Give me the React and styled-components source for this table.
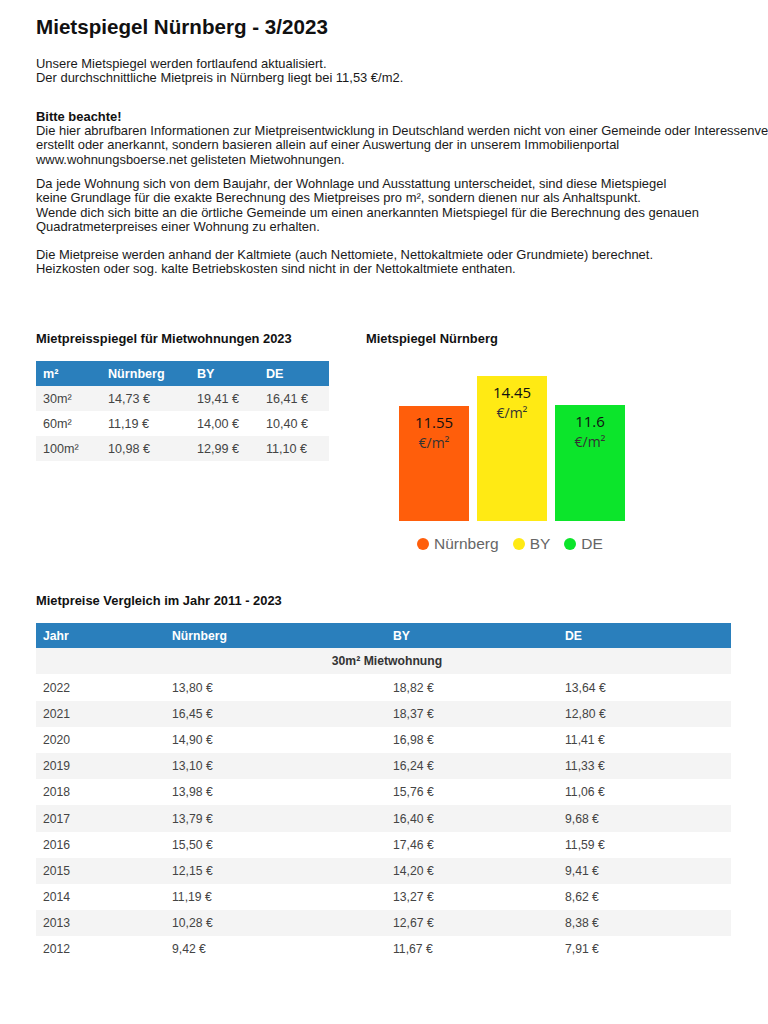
import styled, { createGlobalStyle } from "styled-components";

const GlobalStyle = createGlobalStyle`
  html, body {
    margin: 0;
    padding: 0;
    background: #fff;
    overflow: hidden;
  }
  body {
    font-family: "Liberation Sans", Arial, sans-serif;
    color: #111;
  }
`;

const Page = styled.div`
  width: 900px;
  padding: 14px 0 40px 36px;
`;

const Title = styled.h1`
  margin: 0;
  font-size: 20.6px;
  line-height: 25px;
  font-weight: 700;
  color: #111;
`;

const Text = styled.p`
  margin: ${({ $top }) => $top || 0}px 0 0;
  font-size: 12.95px;
  line-height: 14.4px;
  white-space: nowrap;
  color: #1a1a1a;
`;

const Note = styled.div`
  margin-top: 23px;
  font-size: 12.95px;
  line-height: 15px;
  font-weight: 700;
`;

const Row = styled.div`
  display: flex;
  margin-top: 56px;
`;

const Col = styled.div`
  width: ${({ $w }) => $w}px;
  flex-shrink: 0;
`;

const Heading = styled.h3`
  margin: 0 0 15px;
  font-size: 12.9px;
  line-height: 14px;
  font-weight: 700;
  color: #111;
`;

const Table = styled.table`
  width: ${({ $w }) => $w}px;
  border-collapse: collapse;
  table-layout: fixed;
  font-size: ${({ $fs }) => $fs || 12.6}px;
`;

const Th = styled.th`
  background: #2a7fbc;
  color: #fff;
  font-weight: 700;
  text-align: left;
  height: ${({ $h }) => $h || 25}px;
  padding: 0 0 0 7px;
`;

const Tr = styled.tr`
  background: ${({ $alt }) => ($alt ? "#f4f4f4" : "#fff")};
`;

const Td = styled.td`
  height: ${({ $h }) => $h || 25}px;
  padding: 0 0 0 7px;
  color: #444;
  text-align: ${({ $center }) => ($center ? "center" : "left")};
  font-weight: ${({ $bold }) => ($bold ? 700 : 400)};
  ${({ $bold }) => $bold && "color: #333;"}
`;

const Chart = styled.div`
  padding-left: 33px;
`;

const Bars = styled.div`
  display: flex;
  align-items: flex-end;
  gap: 8px;
  height: 145px;
  margin-top: 30px;
`;

const Bar = styled.div`
  width: 70px;
  background: ${({ $c }) => $c};
  display: flex;
  flex-direction: column;
  align-items: center;
  padding-top: 7px;
  box-sizing: border-box;
  font-family: "Open Sans", sans-serif;
`;

const Value = styled.span`
  font-size: 15px;
  line-height: 18px;
  color: #111;
`;

const Unit = styled.span`
  margin-top: 3px;
  font-size: 14px;
  line-height: 18px;
  color: #333;
`;

const Legend = styled.div`
  display: flex;
  align-items: center;
  margin: 14px 0 0 18px;
  font-family: "Liberation Sans", Arial, sans-serif;
  font-size: 15.5px;
  color: #666;
`;

const LegendItem = styled.span`
  display: flex;
  align-items: center;
  margin-right: 14px;
  &::before {
    content: "";
    width: 12px;
    height: 12px;
    border-radius: 50%;
    background: ${({ $c }) => $c};
    margin-right: 5px;
  }
`;

const Section = styled.div`
  margin-top: 41px;
`;

const small = [
  ["30m²", "14,73 €", "19,41 €", "16,41 €"],
  ["60m²", "11,19 €", "14,00 €", "10,40 €"],
  ["100m²", "10,98 €", "12,99 €", "11,10 €"],
];

const bars = [
  { v: "11.55", h: 115, c: "#ff5e0b" },
  { v: "14.45", h: 145, c: "#ffea14" },
  { v: "11.6", h: 116, c: "#0ce52b" },
];

const years = [
  ["2022", "13,80 €", "18,82 €", "13,64 €"],
  ["2021", "16,45 €", "18,37 €", "12,80 €"],
  ["2020", "14,90 €", "16,98 €", "11,41 €"],
  ["2019", "13,10 €", "16,24 €", "11,33 €"],
  ["2018", "13,98 €", "15,76 €", "11,06 €"],
  ["2017", "13,79 €", "16,40 €", "9,68 €"],
  ["2016", "15,50 €", "17,46 €", "11,59 €"],
  ["2015", "12,15 €", "14,20 €", "9,41 €"],
  ["2014", "11,19 €", "13,27 €", "8,62 €"],
  ["2013", "10,28 €", "12,67 €", "8,38 €"],
  ["2012", "9,42 €", "11,67 €", "7,91 €"],
];

export default function App() {
  return (
    <Page>
      <GlobalStyle />
      <Title>Mietspiegel Nürnberg - 3/2023</Title>

      <Text $top={18}>
        Unsere Mietspiegel werden fortlaufend aktualisiert.
        <br />
        Der durchschnittliche Mietpreis in Nürnberg liegt bei 11,53 €/m2.
      </Text>

      <Note>Bitte beachte!</Note>
      <Text>
        Die hier abrufbaren Informationen zur Mietpreisentwicklung in Deutschland werden nicht von einer Gemeinde oder Interessenverband
        <br />
        erstellt oder anerkannt, sondern basieren allein auf einer Auswertung der in unserem Immobilienportal
        <br />
        www.wohnungsboerse.net gelisteten Mietwohnungen.
      </Text>
      <Text $top={10}>
        Da jede Wohnung sich von dem Baujahr, der Wohnlage und Ausstattung unterscheidet, sind diese Mietspiegel
        <br />
        keine Grundlage für die exakte Berechnung des Mietpreises pro m², sondern dienen nur als Anhaltspunkt.
        <br />
        Wende dich sich bitte an die örtliche Gemeinde um einen anerkannten Mietspiegel für die Berechnung des genauen
        <br />
        Quadratmeterpreises einer Wohnung zu erhalten.
      </Text>
      <Text $top={13}>
        Die Mietpreise werden anhand der Kaltmiete (auch Nettomiete, Nettokaltmiete oder Grundmiete) berechnet.
        <br />
        Heizkosten oder sog. kalte Betriebskosten sind nicht in der Nettokaltmiete enthaten.
      </Text>

      <Row>
        <Col $w={330}>
          <Heading>Mietpreisspiegel für Mietwohnungen 2023</Heading>
          <Table $w={293}>
            <colgroup>
              <col style={{ width: 65 }} />
              <col style={{ width: 89 }} />
              <col style={{ width: 69 }} />
              <col style={{ width: 70 }} />
            </colgroup>
            <thead>
              <tr>
                <Th>m²</Th>
                <Th>Nürnberg</Th>
                <Th>BY</Th>
                <Th>DE</Th>
              </tr>
            </thead>
            <tbody>
              {small.map((r, i) => (
                <Tr key={r[0]} $alt={i % 2 === 0}>
                  {r.map((c) => (
                    <Td key={c}>{c}</Td>
                  ))}
                </Tr>
              ))}
            </tbody>
          </Table>
        </Col>
        <Col $w={300}>
          <Heading>Mietspiegel Nürnberg</Heading>
          <Chart>
            <Bars>
              {bars.map((b) => (
                <Bar key={b.v} $c={b.c} style={{ height: b.h }}>
                  <Value>{b.v}</Value>
                  <Unit>€/m²</Unit>
                </Bar>
              ))}
            </Bars>
            <Legend>
              <LegendItem $c="#ff5e0b">Nürnberg</LegendItem>
              <LegendItem $c="#ffea14">BY</LegendItem>
              <LegendItem $c="#0ce52b">DE</LegendItem>
            </Legend>
          </Chart>
        </Col>
      </Row>

      <Section>
        <Heading>Mietpreise Vergleich im Jahr 2011 - 2023</Heading>
        <Table $w={695} $fs={12.2}>
          <colgroup>
            <col style={{ width: 129 }} />
            <col style={{ width: 221 }} />
            <col style={{ width: 172 }} />
            <col style={{ width: 173 }} />
          </colgroup>
          <thead>
            <tr>
              <Th>Jahr</Th>
              <Th>Nürnberg</Th>
              <Th>BY</Th>
              <Th>DE</Th>
            </tr>
          </thead>
          <tbody>
            <Tr $alt>
              <Td colSpan={4} $center $bold $h={26}>
                30m² Mietwohnung
              </Td>
            </Tr>
            {years.map((r, i) => (
              <Tr key={r[0]} $alt={i % 2 === 1}>
                {r.map((c, j) => (
                  <Td key={j} $h={26.2}>
                    {c}
                  </Td>
                ))}
              </Tr>
            ))}
          </tbody>
        </Table>
      </Section>
    </Page>
  );
}
